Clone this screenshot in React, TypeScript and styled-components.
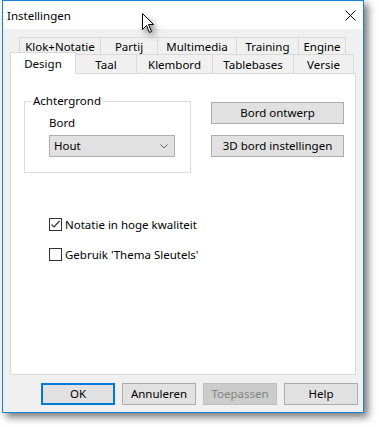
import React from "react";
import styled, { createGlobalStyle } from "styled-components";

const GlobalStyle = createGlobalStyle`
  html, body { margin: 0; padding: 0; background: #ffffff; }
  body {
    font-family: "Noto Sans", "Segoe UI", sans-serif;
    font-size: 11.5px;
    color: #000000;
  }
  * { box-sizing: border-box; }
`;

const Page = styled.div`
  position: relative;
  width: 379px;
  height: 427px;
  padding-left: 2px;
`;

const Window = styled.div`
  width: 362px;
  height: 413px;
  border: 1px solid #1883d7;
  background: #f0f0f0;
  box-shadow: 4px 4px 8px rgba(0, 0, 0, 0.55);
  display: flex;
  flex-direction: column;
`;

const TitleBar = styled.div`
  height: 28px;
  flex: none;
  background: #ffffff;
  display: flex;
  align-items: center;
  justify-content: space-between;
  padding: 0 7px 0 4px;
`;

const Title = styled.span`
  line-height: 16px;
  margin-top: 1px;
`;

const Client = styled.div`
  flex: 1;
  display: flex;
  flex-direction: column;
  padding-top: 8px;
`;

const TabControl = styled.div`
  margin: 0 7px;
  display: flex;
  flex-direction: column;
`;

const TabRow = styled.div<{ $indent: number; $height: number }>`
  display: flex;
  align-items: flex-end;
  height: ${(p) => p.$height}px;
  padding-left: ${(p) => p.$indent}px;
`;

const Tab = styled.div<{ $w: number; $h: number; $selected?: boolean }>`
  flex: none;
  width: ${(p) => p.$w}px;
  height: ${(p) => p.$h}px;
  border: 1px solid #d9d9d9;
  border-bottom: none;
  margin-left: -1px;
  &:first-child { margin-left: 0; }
  background: ${(p) => (p.$selected ? "#ffffff" : "#f0f0f0")};
  display: flex;
  align-items: center;
  justify-content: center;
  line-height: 14px;
  white-space: nowrap;
  padding-top: ${(p) => (p.$selected ? 0 : 2)}px;
  position: ${(p) => (p.$selected ? "relative" : "static")};
  z-index: ${(p) => (p.$selected ? 2 : "auto")};
  margin-bottom: ${(p) => (p.$selected ? -1 : 0)}px;
`;

const Panel = styled.div`
  height: 302px;
  border: 1px solid #d9d9d9;
  background: #ffffff;
  display: flex;
  flex-direction: column;
  padding-left: 13px;
`;

const TopSection = styled.div`
  display: flex;
  align-items: flex-start;
  gap: 20px;
  margin-top: 20px;
`;

const GroupBox = styled.fieldset`
  width: 167px;
  margin: 0;
  border: 1px solid #dcdcdc;
  padding: 0 15px 15px 6px;
`;

const Legend = styled.legend`
  padding: 0 2px;
  line-height: 14px;
`;

const GroupContent = styled.div`
  padding-left: 18px;
  display: flex;
  flex-direction: column;
`;

const FieldLabel = styled.div`
  line-height: 16px;
  margin-top: 7px;
  margin-bottom: 4px;
`;

const Select = styled.div`
  width: 126px;
  height: 22px;
  border: 1px solid #adadad;
  background: #e1e1e1;
  display: flex;
  align-items: center;
  justify-content: space-between;
  padding: 0 6px 0 4px;
  line-height: 16px;
`;

const ButtonColumn = styled.div`
  display: flex;
  flex-direction: column;
  gap: 11px;
  margin-top: 8px;
`;

const Button = styled.div<{ $w: number; $default?: boolean; $disabled?: boolean }>`
  width: ${(p) => p.$w}px;
  height: 22px;
  border: ${(p) => (p.$default ? "2px solid #0078d7" : p.$disabled ? "1px solid #bfbfbf" : "1px solid #adadad")};
  background: ${(p) => (p.$disabled ? "#cccccc" : "#e1e1e1")};
  color: ${(p) => (p.$disabled ? "#838383" : "#000000")};
  display: flex;
  align-items: center;
  justify-content: center;
  line-height: 16px;
  white-space: nowrap;
`;

const CheckList = styled.div`
  display: flex;
  flex-direction: column;
  gap: 17px;
  margin-top: 45px;
  margin-left: 25px;
`;

const CheckRow = styled.label`
  display: flex;
  align-items: center;
  height: 13px;
  gap: 3px;
  line-height: 16px;
  white-space: nowrap;
`;

const CheckBox = styled.span`
  flex: none;
  width: 13px;
  height: 13px;
  border: 1px solid #333333;
  background: #ffffff;
  display: flex;
  align-items: center;
  justify-content: center;
`;

const ButtonRow = styled.div`
  display: flex;
  justify-content: flex-end;
  gap: 7px;
  margin-top: 8px;
  padding-right: 5px;
`;

const Cursor = styled.svg`
  position: absolute;
  left: 142px;
  top: 13px;
  filter: drop-shadow(3px 4px 3px rgba(0, 0, 0, 0.45));
`;

const row1 = [
  { label: "Klok+Notatie", w: 82 },
  { label: "Partij", w: 58 },
  { label: "Multimedia", w: 80 },
  { label: "Training", w: 63 },
  { label: "Engine", w: 48 },
];

const row2 = [
  { label: "Design", w: 66, selected: true },
  { label: "Taal", w: 62 },
  { label: "Klembord", w: 77 },
  { label: "Tablebases", w: 82 },
  { label: "Versie", w: 61 },
];

export default function App() {
  return (
    <Page>
      <GlobalStyle />
      <Window>
        <TitleBar>
          <Title>Instellingen</Title>
          <svg width="11" height="11" viewBox="0 0 11 11">
            <path d="M0.5 0.5 L10.5 10.5 M10.5 0.5 L0.5 10.5" stroke="#000" strokeWidth="1" fill="none" />
          </svg>
        </TitleBar>
        <Client>
          <TabControl>
            <TabRow $indent={9} $height={17}>
              {row1.map((t) => (
                <Tab key={t.label} $w={t.w} $h={17}>
                  {t.label}
                </Tab>
              ))}
            </TabRow>
            <TabRow $indent={0} $height={19}>
              {row2.map((t) => (
                <Tab key={t.label} $w={t.w} $h={t.selected ? 22 : 19} $selected={t.selected}>
                  {t.label}
                </Tab>
              ))}
            </TabRow>
            <Panel>
              <TopSection>
                <GroupBox>
                  <Legend>Achtergrond</Legend>
                  <GroupContent>
                    <FieldLabel>Bord</FieldLabel>
                    <Select>
                      <span>Hout</span>
                      <svg width="8" height="5" viewBox="0 0 8 5">
                        <path d="M0.5 0.5 L4 4 L7.5 0.5" stroke="#606060" strokeWidth="1" fill="none" />
                      </svg>
                    </Select>
                  </GroupContent>
                </GroupBox>
                <ButtonColumn>
                  <Button $w={133}>Bord ontwerp</Button>
                  <Button $w={133}>3D bord instellingen</Button>
                </ButtonColumn>
              </TopSection>
              <CheckList>
                <CheckRow>
                  <CheckBox>
                    <svg width="11" height="11" viewBox="0 0 11 11">
                      <path d="M1.5 5.5 L4 8 L9.5 2" stroke="#333" strokeWidth="1.2" fill="none" />
                    </svg>
                  </CheckBox>
                  Notatie in hoge kwaliteit
                </CheckRow>
                <CheckRow>
                  <CheckBox />
                  Gebruik 'Thema Sleutels'
                </CheckRow>
              </CheckList>
            </Panel>
          </TabControl>
          <ButtonRow>
            <Button $w={74} $default>OK</Button>
            <Button $w={74}>Annuleren</Button>
            <Button $w={74} $disabled>Toepassen</Button>
            <Button $w={74}>Help</Button>
          </ButtonRow>
        </Client>
      </Window>
      <Cursor width="14" height="22" viewBox="0 0 14 22">
        <path d="M0.5 0.5 L0.5 16.5 L4.5 12.5 L7.5 19.5 L9.5 18.5 L6.5 11.5 L11.5 11.5 Z" fill="#fff" stroke="#000" strokeWidth="1" strokeLinejoin="miter" />
      </Cursor>
    </Page>
  );
}
